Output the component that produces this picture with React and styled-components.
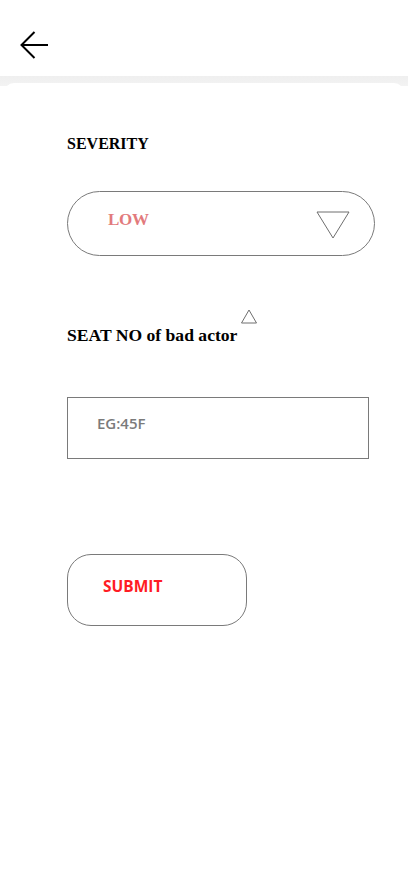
import React from "react";
import styled, { createGlobalStyle } from "styled-components";

const Global = createGlobalStyle`
  html, body { margin: 0; padding: 0; background: #ffffff; }
  body { font-family: "Liberation Serif", "Times New Roman", serif; }
  * { box-sizing: border-box; }
`;

const Page = styled.div`
  width: 408px;
  min-height: 896px;
  background: #ffffff;
  display: flex;
  flex-direction: column;
`;

const Header = styled.header`
  height: 76px;
  display: flex;
  align-items: center;
  padding-left: 20px;
  padding-top: 15px;
  background: #ffffff;
`;

const BackButton = styled.button`
  width: 30px;
  height: 30px;
  padding: 0;
  border: 0;
  background: transparent;
  display: flex;
  align-items: center;
  justify-content: flex-start;
  cursor: pointer;
`;

const Backdrop = styled.div`
  flex: 1;
  display: flex;
  flex-direction: column;
  padding-top: 7px;
  background: linear-gradient(#efefef 0, #f3f3f3 10px, #ffffff 10px);
`;

const Card = styled.main`
  flex: 1;
  margin: 0 4px;
  background: #ffffff;
  border-radius: 10px 10px 0 0;
  padding: 51px 0 0 63px;
  display: flex;
  flex-direction: column;
  align-items: flex-start;
`;

const LabelRow = styled.div`
  display: flex;
  align-items: flex-start;
  margin-top: ${(p) => p.$top || 0}px;
`;

const Label = styled.div`
  font-family: "Liberation Serif", "Times New Roman", serif;
  font-weight: 700;
  font-size: ${(p) => p.$size || 16.5}px;
  line-height: 20px;
  color: #000;
`;

const Marker = styled.span`
  display: flex;
  margin: -16px 0 0 3px;
`;

const Select = styled.div`
  margin-top: 37px;
  width: 308px;
  height: 65px;
  border: 1px solid #7a7a7a;
  border-radius: 33px;
  display: flex;
  align-items: center;
  justify-content: space-between;
  padding: 0 24px 7px 40px;
`;

const SelectValue = styled.span`
  font-family: "Liberation Serif", "Times New Roman", serif;
  font-size: 17px;
  font-weight: 700;
  color: #e27a7c;
  letter-spacing: -0.3px;
`;

const Caret = styled.span`
  display: flex;
  margin-top: 10px;
`;

const Input = styled.div`
  margin-top: 52px;
  width: 302px;
  height: 62px;
  border: 1px solid #7a7a7a;
  padding: 15px 0 0 29px;
  font-family: "Open Sans", "Liberation Sans", sans-serif;
  font-weight: 600;
  font-size: 15px;
  color: #7b7b7b;
`;

const SubmitButton = styled.button`
  margin-top: 95px;
  width: 180px;
  height: 72px;
  border: 1px solid #7a7a7a;
  border-radius: 24px;
  background: #fff;
  text-align: left;
  padding: 0 0 9px 35px;
  font-family: "Open Sans", "Liberation Sans", sans-serif;
  font-weight: 700;
  font-size: 15.5px;
  color: #ff1c24;
  cursor: pointer;
`;

export default function App() {
  return (
    <Page>
      <Global />
      <Header>
        <BackButton aria-label="Back">
          <svg width="30" height="30" viewBox="0 0 30 30" fill="none">
            <path d="M1.5 14H28" stroke="#000" strokeWidth="2" />
            <path d="M14.5 1L1.5 14L14.5 27" stroke="#000" strokeWidth="2" />
          </svg>
        </BackButton>
      </Header>
      <Backdrop>
        <Card>
          <LabelRow>
            <Label $size={16}>SEVERITY</Label>
          </LabelRow>
          <Select>
            <SelectValue>LOW</SelectValue>
            <Caret>
              <svg width="34" height="28" viewBox="0 0 34 28" fill="none">
                <path d="M1 1H33L17 27Z" stroke="#6e6e6e" strokeWidth="1" strokeLinejoin="miter" />
              </svg>
            </Caret>
          </Select>
          <LabelRow $top={69}>
            <Label $size={17.6}>SEAT NO of bad actor</Label>
            <Marker>
              <svg width="18" height="15" viewBox="0 0 18 15" fill="none">
                <path d="M9 1L16.5 14H1.5Z" stroke="#6e6e6e" strokeWidth="1" />
              </svg>
            </Marker>
          </LabelRow>
          <Input>EG:45F</Input>
          <SubmitButton>SUBMIT</SubmitButton>
        </Card>
      </Backdrop>
    </Page>
  );
}
